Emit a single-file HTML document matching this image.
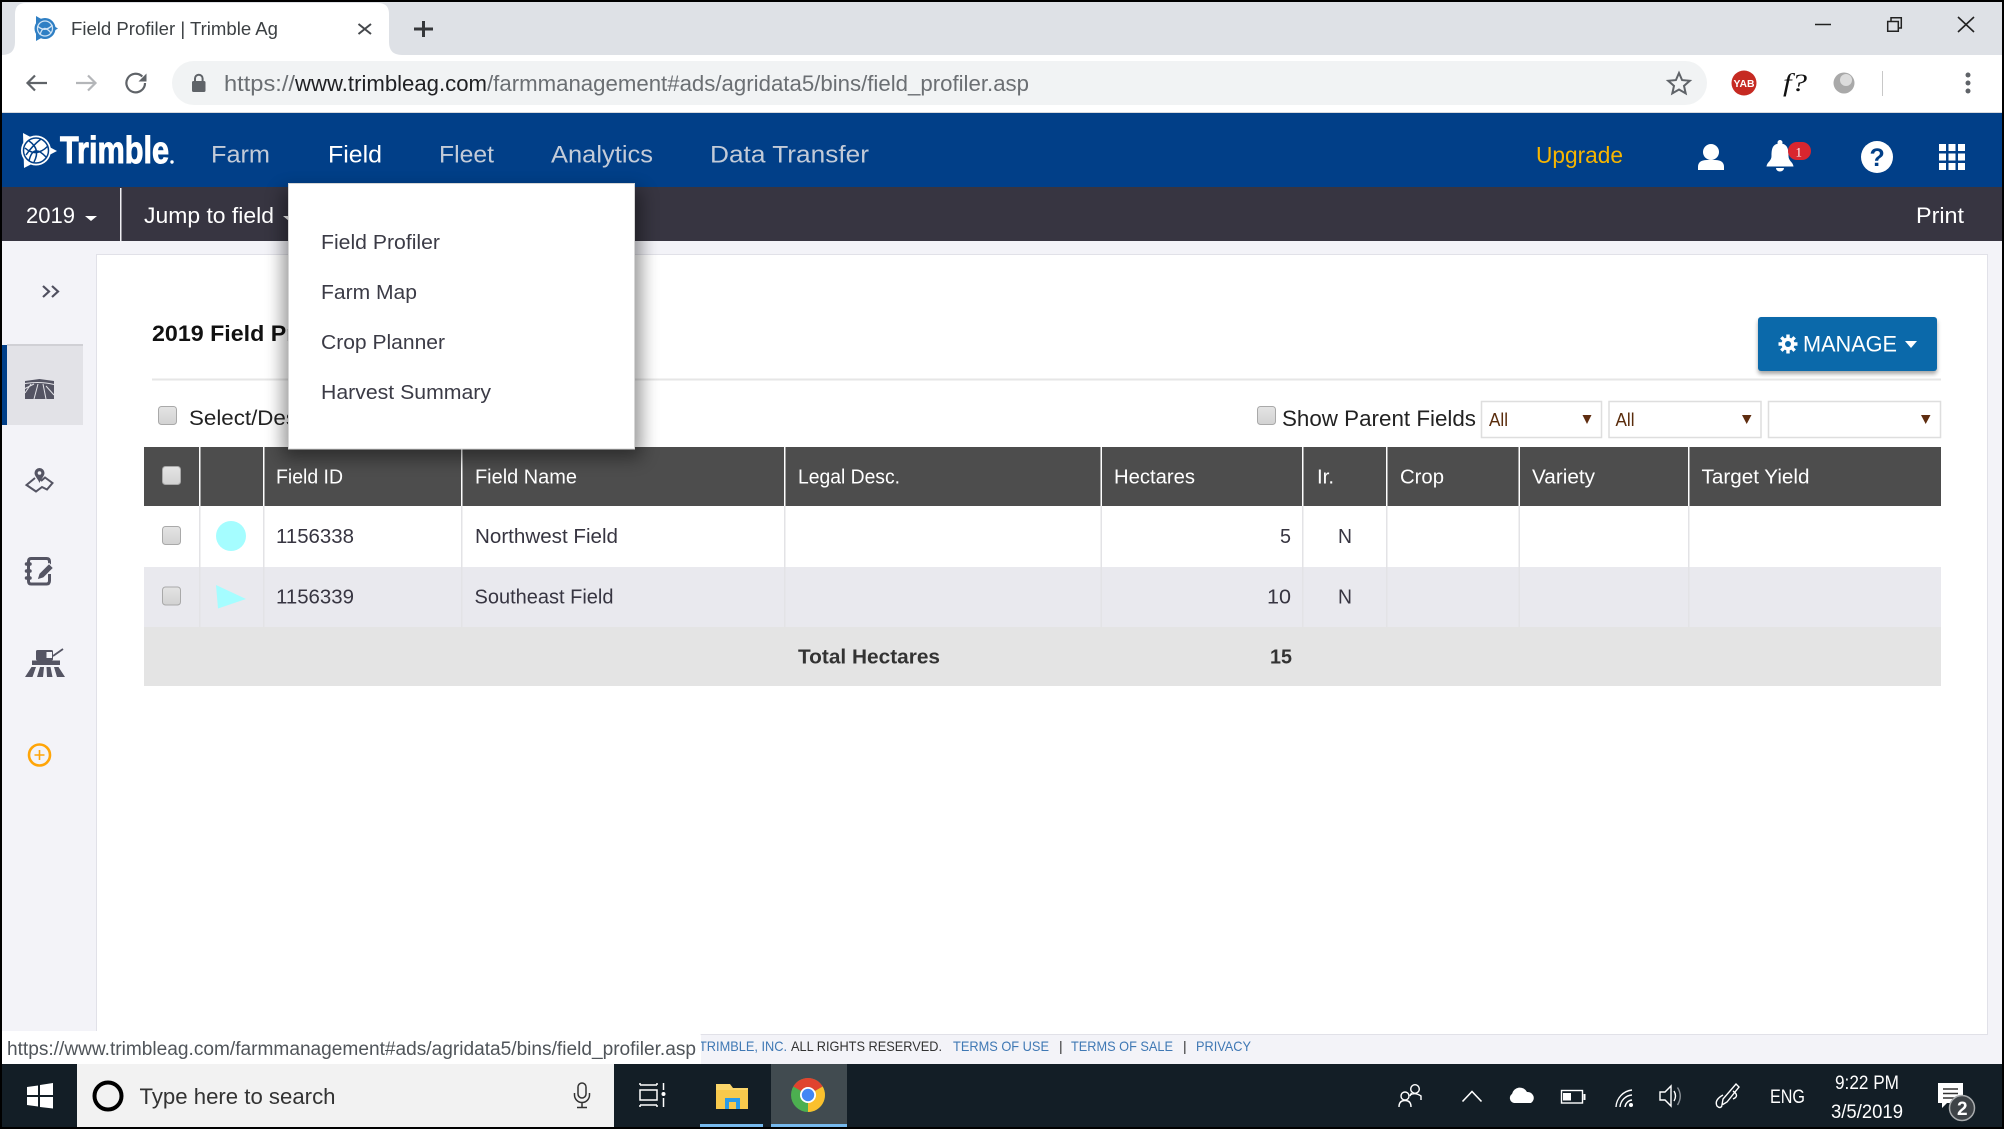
<!DOCTYPE html>
<html lang="en"><head><meta charset="utf-8"><title>Field Profiler | Trimble Ag</title>
<style>
html,body{margin:0;padding:0;background:#000;width:2004px;height:1129px;overflow:hidden}
svg{display:block}
text{font-family:"Liberation Sans",Arial,sans-serif;white-space:pre}
.cond{font-weight:700}
</style></head><body>
<svg width="2004" height="1129" viewBox="0 0 2004 1129" xmlns="http://www.w3.org/2000/svg">
<defs>
<linearGradient id="cb" x1="0" y1="0" x2="0" y2="1"><stop offset="0" stop-color="#e4e4e4"/><stop offset="1" stop-color="#d2d2d2"/></linearGradient>
<filter id="sh" x="-20%" y="-20%" width="140%" height="140%"><feGaussianBlur stdDeviation="9"/></filter>
<filter id="sh2" x="-10%" y="-20%" width="120%" height="150%"><feGaussianBlur stdDeviation="2"/></filter>
</defs>
<rect width="2004" height="1129" fill="#000"/>

<!-- tab strip -->
<rect x="2" y="2" width="2000" height="53" fill="#dee1e6"/>
<path d="M2 55 Q15 55 15 42 V14 Q15 3 26 3 H378 Q389 3 389 14 V42 Q389 55 402 55 Z" fill="#fff"/>
<g transform="translate(34,16)" fill="none">
<path d="M2 0 L24 12.500 L2 25 Z" fill="#2f7fc4"/>
<circle cx="11" cy="12.500" r="10.500" fill="#2f7fc4"/>
<circle cx="11" cy="12.500" r="7.500" stroke="#cfe3f5" stroke-width="1.300"/>
<path d="M3.500 10 Q11 17 18.500 9 M6 19 Q9 7 17 17" stroke="#cfe3f5" stroke-width="1.300"/>
</g>
<text x="71" y="35" font-size="18" fill="#3c4043" textLength="207" lengthAdjust="spacingAndGlyphs">Field Profiler | Trimble Ag</text>
<path d="M358.500 24 L371 34 M371 24 L358.500 34" stroke="#45484c" stroke-width="2" fill="none"/>
<path d="M423.500 21 V37 M414 29 H433" stroke="#35373a" stroke-width="3" fill="none"/>
<!-- window buttons -->
<path d="M1815 24.500 H1831" stroke="#222" stroke-width="1.500"/>
<path d="M1887.700 21.500 H1898.300 V31.300 H1887.700 Z M1891 21 V17.700 H1901.300 V28 H1898.500" stroke="#222" stroke-width="1.500" fill="none"/>
<path d="M1958 17 L1974 32 M1974 17 L1958 32" stroke="#222" stroke-width="1.600" fill="none"/>

<!-- toolbar -->
<rect x="2" y="55" width="2000" height="58" fill="#fff"/>
<rect x="2" y="112" width="2000" height="1" fill="#d8dade"/>
<path d="M47 83 H28 M35 75.500 L27.500 83 L35 90.500" stroke="#5f6368" stroke-width="2.200" fill="none"/>
<path d="M76 83 H95 M88 75.500 L95.500 83 L88 90.500" stroke="#b4b6b9" stroke-width="2.200" fill="none"/>
<path d="M145 83 A9.300 9.300 0 1 1 142.300 76.500" stroke="#5f6368" stroke-width="2.200" fill="none"/>
<path d="M146.500 73.500 V81.500 H138.500 Z" fill="#5f6368"/>
<rect x="172" y="61" width="1535" height="44" rx="22" fill="#f1f3f4"/>
<path d="M195 81 V78.500 A3.800 3.800 0 0 1 202.600 78.500 V81" stroke="#5f6368" stroke-width="2" fill="none"/>
<rect x="192" y="81" width="13.500" height="11" rx="1.500" fill="#5f6368"/>
<text x="224" y="91" font-size="22" fill="#6b6f73" textLength="71" lengthAdjust="spacingAndGlyphs">https://</text>
<text x="295" y="91" font-size="22" fill="#202124" textLength="192" lengthAdjust="spacingAndGlyphs">www.trimbleag.com</text>
<text x="487" y="91" font-size="22" fill="#6b6f73" textLength="542" lengthAdjust="spacingAndGlyphs">/farmmanagement#ads/agridata5/bins/field_profiler.asp</text>
<path d="M1679 73 L1682.100 80.100 L1689.800 80.800 L1684 85.900 L1685.700 93.400 L1679 89.500 L1672.300 93.400 L1674 85.900 L1668.200 80.800 L1675.900 80.100 Z" fill="none" stroke="#5f6368" stroke-width="2"/>
<circle cx="1744" cy="83" r="12.500" fill="#c62a22"/>
<text x="1733.500" y="87" font-size="10" font-weight="700" fill="#fff" textLength="21" lengthAdjust="spacingAndGlyphs">YAB</text>
<text x="1783" y="91" font-size="25" font-style="italic" style="font-family:'Liberation Serif',serif" fill="#111" textLength="24" lengthAdjust="spacingAndGlyphs">f?</text>
<circle cx="1844" cy="83" r="10.500" fill="#a9a9a9"/><circle cx="1846" cy="80" r="6" fill="#dcdcdc"/>
<rect x="1882" y="71" width="1" height="25" fill="#c8c8c8"/>
<circle cx="1968" cy="75" r="2.500" fill="#5f6368"/><circle cx="1968" cy="83" r="2.500" fill="#5f6368"/><circle cx="1968" cy="91" r="2.500" fill="#5f6368"/>

<!-- blue header -->
<rect x="2" y="113" width="2000" height="74" fill="#013f88"/>
<g fill="#fff">
<path d="M23 133 L57 151 L24 168 Z"/>
<circle cx="36" cy="150.500" r="15"/>
</g>
<g fill="none" stroke="#013f88" stroke-width="1.500">
<circle cx="36" cy="150.500" r="12.500"/>
<path d="M25 148 Q36 158 48 146 M29 161 Q33 143 46 157 M29 141 Q41 149 34 162 M41 139 Q32 146 26 155"/>
</g>
<text x="60" y="163" font-size="38" class="cond" fill="#fff" textLength="109" lengthAdjust="spacingAndGlyphs" stroke="#fff" stroke-width="1">Trimble</text>
<circle cx="172" cy="162" r="1.700" fill="#fff"/>
<text x="211" y="162.500" font-size="24" fill="#c3cbd8" textLength="59" lengthAdjust="spacingAndGlyphs">Farm</text>
<text x="328" y="162.500" font-size="24" fill="#fff" textLength="54" lengthAdjust="spacingAndGlyphs">Field</text>
<text x="439" y="162.500" font-size="24" fill="#c3cbd8" textLength="55" lengthAdjust="spacingAndGlyphs">Fleet</text>
<text x="551" y="162.500" font-size="24" fill="#c3cbd8" textLength="102" lengthAdjust="spacingAndGlyphs">Analytics</text>
<text x="710" y="162.500" font-size="24" fill="#c3cbd8" textLength="159" lengthAdjust="spacingAndGlyphs">Data Transfer</text>
<text x="1536" y="163" font-size="23" fill="#f7b500" textLength="87" lengthAdjust="spacingAndGlyphs">Upgrade</text>
<circle cx="1711" cy="152" r="8" fill="#fff"/>
<path d="M1698 170 V167 Q1698 160 1707 160 H1715 Q1724 160 1724 167 V170 Z" fill="#fff"/>
<path d="M1780 140 A2.500 2.500 0 0 1 1780 145 A2.500 2.500 0 0 1 1780 140 Z M1780 143.500 C1788 143.500 1788.500 150 1788.500 156 C1788.500 161 1793 162 1793.500 166.500 H1766.500 C1767 162 1771.500 161 1771.500 156 C1771.500 150 1772 143.500 1780 143.500 Z M1776 168 H1784 A4 3.500 0 0 1 1776 168 Z" fill="#fff"/>
<rect x="1788" y="142" width="23" height="18" rx="9" fill="#d9262f"/>
<text x="1795.500" y="156.500" font-size="13" style="font-family:'Liberation Serif',serif" fill="#fff">1</text>
<circle cx="1877" cy="157" r="16" fill="#fff"/>
<text x="1869.500" y="166" font-size="25" font-weight="700" fill="#013f88">?</text>
<g fill="#fff">
<rect x="1939" y="144" width="7" height="7"/><rect x="1948.500" y="144" width="7" height="7"/><rect x="1958" y="144" width="7" height="7"/>
<rect x="1939" y="153.500" width="7" height="7"/><rect x="1948.500" y="153.500" width="7" height="7"/><rect x="1958" y="153.500" width="7" height="7"/>
<rect x="1939" y="163" width="7" height="7"/><rect x="1948.500" y="163" width="7" height="7"/><rect x="1958" y="163" width="7" height="7"/>
</g>

<!-- dark bar -->
<rect x="2" y="187" width="2000" height="54" fill="#373541"/>
<text x="26" y="223" font-size="22" fill="#fff" textLength="49" lengthAdjust="spacingAndGlyphs">2019</text>
<path d="M85 216 H97 L91 221 Z" fill="#fff"/>
<rect x="120" y="188" width="1.500" height="53" fill="#f0f0f4"/>
<text x="144" y="223" font-size="22" fill="#fff" textLength="130" lengthAdjust="spacingAndGlyphs">Jump to field</text>
<path d="M283 216 H295 L289 221 Z" fill="#fff"/>
<text x="1916" y="223" font-size="22" fill="#fff" textLength="48" lengthAdjust="spacingAndGlyphs">Print</text>

<!-- page bg -->
<rect x="2" y="241" width="2000" height="823" fill="#f3f3f8"/>
<!-- sidebar -->
<path d="M43 286 L49 291.500 L43 297 M52 286 L58 291.500 L52 297" fill="none" stroke="#4f4f5f" stroke-width="2.200"/>
<rect x="7" y="344" width="76" height="81" fill="#e2e2e7"/>
<rect x="7" y="344" width="76" height="2" fill="#d0d0d5"/>
<rect x="2" y="345" width="5" height="80" fill="#013f88"/>
<!-- field icon -->
<path d="M25 381 L39.500 379 L54 381 V399 H25 Z" fill="#545463"/>
<path d="M25 383.500 Q40 381 54 384.500 M38 384 L34 399 M31 384 L25 393 M43 384 L46 399 M46 386 L54 395 M25 388.500 L34 384" stroke="#e2e2e7" stroke-width="1" fill="none"/>
<!-- map icon -->
<path d="M35 478 L26.500 485 L36 491.500 L42 487 L47 489.500 L52.500 483 L45 477.500 L41 481" fill="none" stroke="#545463" stroke-width="2"/>
<path d="M39.500 468 A5 5 0 0 1 44.500 473 C44.500 476 41 479 39.500 483 C38 479 34.500 476 34.500 473 A5 5 0 0 1 39.500 468 Z" fill="#545463"/>
<circle cx="39.500" cy="473" r="1.800" fill="#f3f3f8"/>
<!-- notebook icon -->
<path d="M31 558.500 H46.500 Q49.500 558.500 49.500 561.500 V567 M49.500 574 V580.500 Q49.500 584 46.500 584 H31 Q28.500 584 28.500 581 V561.500 Q28.500 558.500 31 558.500" fill="none" stroke="#545463" stroke-width="3"/>
<path d="M26.500 564 H30 M26.500 571 H30 M26.500 578 H30" stroke="#545463" stroke-width="3.500" stroke-linecap="round" fill="none"/>
<path d="M37 580 L39 573.500 L49 563.500 L53.500 568 L43.500 578 Z" fill="#545463" stroke="#f3f3f8" stroke-width="1.200"/>
<!-- combine icon -->
<rect x="36" y="650" width="17" height="10.500" rx="1.500" fill="#545463"/>
<rect x="46" y="651.500" width="6.500" height="7" fill="#f3f3f8" stroke="#545463" stroke-width="1"/>
<path d="M53 656 L63 649" stroke="#545463" stroke-width="1.800"/>
<rect x="32" y="660.500" width="28" height="4.500" fill="#545463"/>
<path d="M25 677 L31.500 667 L36 667 L32.500 677 Z M37 677 L40 667 L44 667 L43 677 Z M47 677 L46.500 667 L50.500 667 L52.500 677 Z M57 677 L54 667 L58.500 667 L65 677 Z" fill="#545463"/>
<circle cx="39.500" cy="755" r="10.500" fill="none" stroke="#ffa508" stroke-width="2.600"/>
<path d="M39.500 750 V760 M34.500 755 H44.500" stroke="#ffa508" stroke-width="1.600"/>

<!-- content panel -->
<rect x="96.500" y="254.500" width="1891" height="780" fill="#fff" stroke="#e1e1e8"/>
<text x="152" y="341" font-size="22" font-weight="700" fill="#111" textLength="200" lengthAdjust="spacingAndGlyphs">2019 Field Profiler</text>
<rect x="152" y="378.500" width="1789" height="2" fill="#e6e6e6"/>
<rect x="158.500" y="406.500" width="18" height="18" rx="3" fill="url(#cb)" stroke="#a9a9a9"/>
<text x="189" y="425" font-size="21" fill="#222" textLength="185" lengthAdjust="spacingAndGlyphs">Select/Deselect All</text>

<!-- manage -->
<rect x="1758" y="320" width="179" height="54" rx="3" fill="#000" opacity=".35" filter="url(#sh2)"/>
<rect x="1758" y="317" width="179" height="54" rx="3" fill="#0b69aa"/>
<g fill="#fff"><circle cx="1788" cy="344" r="6.500"/><g stroke="#fff" stroke-width="3.400"><path d="M1788 334.500 V353.500 M1778.500 344 H1797.500 M1781.300 337.300 L1794.700 350.700 M1794.700 337.300 L1781.300 350.700"/></g></g><circle cx="1788" cy="344" r="3" fill="#0b69aa"/>
<text x="1803" y="351.500" font-size="22" fill="#fff" textLength="94" lengthAdjust="spacingAndGlyphs">MANAGE</text>
<path d="M1905 341 H1917 L1911 348 Z" fill="#fff"/>

<!-- filters -->
<rect x="1257.500" y="406.500" width="18" height="18" rx="3" fill="url(#cb)" stroke="#a9a9a9"/>
<text x="1282" y="426" font-size="22" fill="#222" textLength="194" lengthAdjust="spacingAndGlyphs">Show Parent Fields</text>
<g fill="#fff" stroke="#dedede" stroke-width="1.500">
<rect x="1481.500" y="401.500" width="120" height="36"/><rect x="1609" y="401.500" width="152" height="36"/><rect x="1768.500" y="401.500" width="172" height="36"/>
</g>
<text x="1489" y="426" font-size="18" fill="#5a2c0c" textLength="19" lengthAdjust="spacingAndGlyphs">All</text>
<text x="1615.500" y="426" font-size="18" fill="#5a2c0c" textLength="19" lengthAdjust="spacingAndGlyphs">All</text>
<path d="M1582.500 415 H1591.500 L1587 424 Z M1742 415 H1751.500 L1746.700 424 Z M1921 415 H1930.500 L1925.700 424 Z" fill="#5f2d10"/>

<!-- table -->
<rect x="144" y="447" width="1797" height="59" fill="#4d4d4d"/>
<rect x="144" y="506" width="1797" height="61" fill="#fff"/>
<rect x="144" y="567" width="1797" height="60" fill="#e9e9ee"/>
<rect x="144" y="627" width="1797" height="59" fill="#e4e4e4"/>
<g fill="#fff"><rect x="199" y="447" width="1.500" height="59"/><rect x="263" y="447" width="1.500" height="59"/><rect x="461" y="447" width="1.500" height="59"/><rect x="784" y="447" width="1.500" height="59"/><rect x="1100.500" y="447" width="1.500" height="59"/><rect x="1302" y="447" width="1.500" height="59"/><rect x="1386" y="447" width="1.500" height="59"/><rect x="1518.500" y="447" width="1.500" height="59"/><rect x="1688" y="447" width="1.500" height="59"/></g>
<g fill="#e3e3e6"><rect x="199" y="506" width="1.500" height="121"/><rect x="263" y="506" width="1.500" height="121"/><rect x="461" y="506" width="1.500" height="121"/><rect x="784" y="506" width="1.500" height="121"/><rect x="1100.500" y="506" width="1.500" height="121"/><rect x="1302" y="506" width="1.500" height="121"/><rect x="1386" y="506" width="1.500" height="121"/><rect x="1518.500" y="506" width="1.500" height="121"/><rect x="1688" y="506" width="1.500" height="121"/></g>
<rect x="162.500" y="466.500" width="18" height="18" rx="3" fill="url(#cb)" stroke="#a9a9a9"/>
<rect x="162.500" y="526.500" width="18" height="18" rx="3" fill="url(#cb)" stroke="#a9a9a9"/>
<rect x="162.500" y="587" width="18" height="18" rx="3" fill="url(#cb)" stroke="#a9a9a9"/>
<circle cx="231" cy="536" r="15" fill="#a5fdff"/>
<path d="M216 585 L246 599 L218 608.500 Z" fill="#a5fdff"/>
<g font-size="20" fill="#fff">
<text x="276" y="483.500" textLength="67" lengthAdjust="spacingAndGlyphs">Field ID</text>
<text x="475" y="483.500" textLength="102" lengthAdjust="spacingAndGlyphs">Field Name</text>
<text x="798" y="483.500" textLength="102" lengthAdjust="spacingAndGlyphs">Legal Desc.</text>
<text x="1114" y="483.500" textLength="81" lengthAdjust="spacingAndGlyphs">Hectares</text>
<text x="1317" y="483.500" textLength="17" lengthAdjust="spacingAndGlyphs">Ir.</text>
<text x="1400" y="483.500" textLength="44" lengthAdjust="spacingAndGlyphs">Crop</text>
<text x="1532" y="483.500" textLength="63" lengthAdjust="spacingAndGlyphs">Variety</text>
<text x="1701.500" y="483.500" textLength="108" lengthAdjust="spacingAndGlyphs">Target Yield</text>
</g>
<g font-size="20" fill="#373541">
<text x="276" y="543" textLength="78" lengthAdjust="spacingAndGlyphs">1156338</text>
<text x="475" y="543" textLength="143" lengthAdjust="spacingAndGlyphs">Northwest Field</text>
<text x="1280" y="543" textLength="11" lengthAdjust="spacingAndGlyphs">5</text>
<text x="1338" y="543" textLength="14" lengthAdjust="spacingAndGlyphs">N</text>
<text x="276" y="603.500" textLength="78" lengthAdjust="spacingAndGlyphs">1156339</text>
<text x="474.500" y="603.500" textLength="139" lengthAdjust="spacingAndGlyphs">Southeast Field</text>
<text x="1267" y="603.500" textLength="24" lengthAdjust="spacingAndGlyphs">10</text>
<text x="1338" y="603.500" textLength="14" lengthAdjust="spacingAndGlyphs">N</text>
</g>
<text x="798" y="663.500" font-size="20" font-weight="700" fill="#333" textLength="142" lengthAdjust="spacingAndGlyphs">Total Hectares</text>
<text x="1270" y="663.500" font-size="20" font-weight="700" fill="#333" textLength="22" lengthAdjust="spacingAndGlyphs">15</text>

<!-- dropdown -->
<rect x="283" y="190" width="358" height="268" fill="#000" opacity=".42" filter="url(#sh)"/>
<rect x="288.500" y="183.500" width="346" height="265.500" fill="#fff" stroke="#d6d6d6"/>
<g font-size="20" fill="#3b3b46">
<text x="321" y="249" textLength="119" lengthAdjust="spacingAndGlyphs">Field Profiler</text>
<text x="321" y="299" textLength="96" lengthAdjust="spacingAndGlyphs">Farm Map</text>
<text x="321" y="349" textLength="124" lengthAdjust="spacingAndGlyphs">Crop Planner</text>
<text x="321" y="399" textLength="170" lengthAdjust="spacingAndGlyphs">Harvest Summary</text>
</g>

<!-- footer -->
<rect x="702" y="1035" width="1286" height="29" fill="#f3f3f8"/>
<g font-size="14">
<text x="699" y="1051" fill="#3f78b4" textLength="88" lengthAdjust="spacingAndGlyphs">TRIMBLE, INC.</text>
<text x="791" y="1051" fill="#333" textLength="151" lengthAdjust="spacingAndGlyphs">ALL RIGHTS RESERVED.</text>
<text x="953" y="1051" fill="#3f78b4" textLength="96" lengthAdjust="spacingAndGlyphs">TERMS OF USE</text>
<text x="1059" y="1051" fill="#333">|</text>
<text x="1071" y="1051" fill="#3f78b4" textLength="102" lengthAdjust="spacingAndGlyphs">TERMS OF SALE</text>
<text x="1183" y="1051" fill="#333">|</text>
<text x="1196" y="1051" fill="#3f78b4" textLength="55" lengthAdjust="spacingAndGlyphs">PRIVACY</text>
</g>

<!-- taskbar -->
<rect x="2" y="1064" width="2000" height="63" fill="#131e26"/>
<rect x="77" y="1064" width="537" height="63" fill="#f2f2f2"/>
<rect x="771" y="1064" width="76" height="63" fill="#414b50"/>
<rect x="700" y="1124" width="63" height="3" fill="#76b9ed"/>
<rect x="771" y="1124" width="76" height="3" fill="#76b9ed"/>
<path d="M27 1087 L38 1085.500 V1095 H27 Z M40 1085 L53 1083 V1095 H40 Z M27 1097 H38 V1106.500 L27 1105 Z M40 1097 H53 V1108.500 L40 1107 Z" fill="#fff"/>
<circle cx="108" cy="1096" r="13.500" fill="none" stroke="#000" stroke-width="4"/>
<text x="139.500" y="1104" font-size="22" fill="#333" textLength="196" lengthAdjust="spacingAndGlyphs">Type here to search</text>
<rect x="578" y="1083" width="8" height="15" rx="4" fill="none" stroke="#333" stroke-width="1.500"/>
<path d="M574.500 1093 V1095 A7.500 7.500 0 0 0 589.500 1095 V1093 M582 1102.500 V1107 M577 1107.500 H587" fill="none" stroke="#333" stroke-width="1.500"/>
<g fill="none" stroke="#fff" stroke-width="1.500">
<rect x="640" y="1090" width="17" height="10"/>
<path d="M640 1085 H657 M640 1105 H657 M640 1083 V1085 M657 1083 V1085 M640 1105 V1107 M657 1105 V1107 M663.500 1083 V1090 M663.500 1098 V1107"/>
</g>
<circle cx="663.500" cy="1094" r="2" fill="#fff"/>
<path d="M716 1084 H730 L733 1088 H748 V1109 H716 Z" fill="#fbd66a"/>
<path d="M716 1090 H748 V1109 H716 Z" fill="#f8c94c"/>
<path d="M725 1109 V1098 H740 V1109 H736 V1102 H729 V1109 Z" fill="#2b9be8"/>
<circle cx="808" cy="1095" r="17" fill="#4caf50"/>
<path d="M808 1095 L793.300 1086.500 A17 17 0 0 1 822.700 1086.500 Z" fill="#e0432f"/>
<path d="M808 1095 L822.700 1086.500 A17 17 0 0 1 808 1112 Z" fill="#fbc02d"/>
<circle cx="808" cy="1095" r="8" fill="#fff"/><circle cx="808" cy="1095" r="6.200" fill="#4286f4"/>

<!-- tray -->
<g fill="none" stroke="#fff" stroke-width="1.400">
<circle cx="1405" cy="1096" r="4"/><path d="M1399 1107 Q1399 1100.500 1405 1100.500 Q1411 1100.500 1411 1107"/>
<circle cx="1415" cy="1089" r="4.300"/><path d="M1410 1095 Q1415 1092 1421 1096 V1100 M1411.500 1093 L1410 1096"/>
<path d="M1462.500 1101.500 L1472 1091.500 L1481.500 1101.500" stroke-width="1.600"/>
<rect x="1561.500" y="1090.500" width="21" height="12.500"/>
<path d="M1584.500 1094 V1100" stroke-width="2"/>
<path d="M1616 1107 A18 18 0 0 1 1632 1090 M1620 1107 A13 13 0 0 1 1632 1095 M1625 1107 A8 8 0 0 1 1632 1100"/>
<path d="M1660 1092 H1665 L1671 1086 V1106 L1665 1100 H1660 Z"/>
<path d="M1674 1091 Q1677 1096 1674 1101" />
<path d="M1677.500 1087.500 Q1683 1096 1677.500 1105" stroke="#8a9096"/>
<path d="M1736 1084 L1739 1087 L1727 1102 L1722 1105 L1723 1099 Z"/>
<path d="M1733 1091 Q1740 1096 1733 1099 M1723 1095 Q1714 1100 1717 1106 Q1720 1109 1722 1106"/>
</g>
<rect x="1563" y="1093" width="8" height="7.500" fill="#fff"/>
<circle cx="1631" cy="1105" r="2" fill="#fff"/>
<path d="M1514 1103 A5 5 0 0 1 1512 1094 A8 8 0 0 1 1527 1092 A6 6 0 0 1 1531 1103 Z" fill="#fff"/>
<text x="1770" y="1103" font-size="19" fill="#fff" textLength="35" lengthAdjust="spacingAndGlyphs">ENG</text>
<text x="1835" y="1089" font-size="19" fill="#fff" textLength="64" lengthAdjust="spacingAndGlyphs">9:22 PM</text>
<text x="1831" y="1118" font-size="19" fill="#fff" textLength="72" lengthAdjust="spacingAndGlyphs">3/5/2019</text>
<path d="M1938 1083 H1963 V1103 H1947 L1942 1108 V1103 H1938 Z" fill="#fff"/>
<path d="M1943 1089 H1958 M1943 1093.500 H1958 M1943 1098 H1955" stroke="#333" stroke-width="1.500"/>
<circle cx="1962" cy="1108" r="12.500" fill="#3e4347" stroke="#a9acae" stroke-width="1.500"/>
<text x="1957" y="1115" font-size="19" font-weight="700" fill="#fff">2</text>

<!-- status bubble -->
<path d="M2 1031 H695 Q701 1031 701 1037 V1064 H2 Z" fill="#fff"/>
<text x="7" y="1055" font-size="19" fill="#50555a" textLength="689" lengthAdjust="spacingAndGlyphs">https://www.trimbleag.com/farmmanagement#ads/agridata5/bins/field_profiler.asp</text>
</svg>
</body></html>
